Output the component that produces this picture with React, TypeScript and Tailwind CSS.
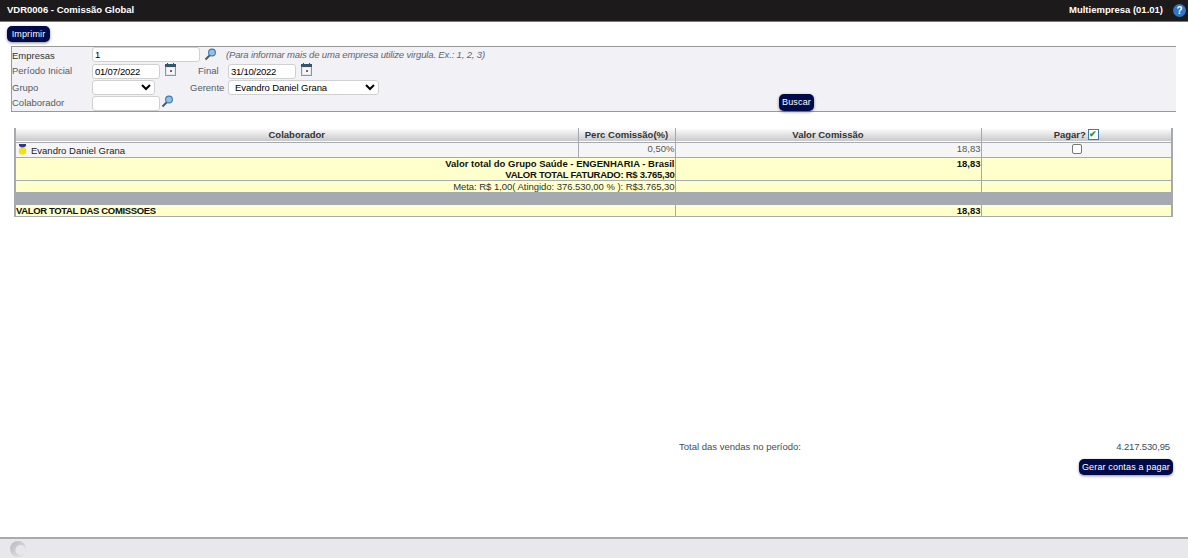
import type { ReactNode } from 'react'

const inputCls =
  'h-[15px] rounded-[3px] border border-[#d0d0d0] bg-white px-[2px] text-[9.5px] text-black outline-none'
const btnCls =
  'rounded-[5px] bg-[#000b4a] text-[9px] leading-none tracking-[0.15px] text-white shadow-[0_1px_3px_rgba(0,0,0,0.45)]'

function Lens() {
  return (
    <svg width="13" height="13" viewBox="0 0 13 13" aria-hidden>
      <line x1="6" y1="7" x2="1.5" y2="11.5" stroke="#4f5a54" strokeWidth="2" />
      <circle cx="8" cy="4.5" r="3.4" fill="#8fc0ea" stroke="#3f78a8" strokeWidth="1.1" />
    </svg>
  )
}

function Calendar() {
  return (
    <svg width="11" height="13" viewBox="0 0 11 13" aria-hidden>
      <rect x="0.5" y="1.5" width="10" height="11" fill="#dfe9f2" stroke="#7f98ae" />
      <rect x="0" y="1" width="11" height="3" fill="#33566f" />
      <rect x="2" y="0" width="1" height="2" fill="#33566f" />
      <rect x="8" y="0" width="1" height="2" fill="#33566f" />
      <rect x="2" y="5" width="7" height="6" fill="#f5f7f9" />
      <rect x="5" y="7" width="2" height="2" fill="#d83a3a" />
    </svg>
  )
}

function Medal() {
  return (
    <svg width="9" height="11" viewBox="0 0 9 11" className="-translate-y-[1px] shrink-0" aria-hidden>
      <path d="M1 0h7v2L5 4H4L1 2z" fill="#2f3a8f" />
      <circle cx="4.5" cy="7" r="3.8" fill="#f4df1c" />
    </svg>
  )
}

function Row({ label, children, labelClass }: { label: string; children: ReactNode; labelClass?: string }) {
  return (
    <div className="flex h-[16px] items-center">
      <span className={`w-[80px] shrink-0 ${labelClass ?? 'text-[#555b66]'}`}>{label}</span>
      {children}
    </div>
  )
}

export default function App() {
  return (
    <div className="flex h-[558px] w-[1188px] flex-col overflow-hidden bg-white font-['Liberation_Sans',Arial,sans-serif] text-[9.5px] text-[#222]">
      <header className="flex h-[22px] shrink-0 items-center justify-between border-b border-[#777] bg-[#1d1a1b] pr-[2px] pl-[7px] font-bold text-white">
        <span>VDR0006 - Comissão Global</span>
        <div className="flex items-center gap-[10px]">
          <span>Multiempresa (01.01)</span>
          <svg width="13" height="13" viewBox="0 0 13 13" aria-hidden>
            <circle cx="6.5" cy="6.5" r="6.5" fill="#2f77c4" />
            <text x="6.5" y="10.2" textAnchor="middle" fontSize="10" fontWeight="700" fill="#fff">?</text>
          </svg>
        </div>
      </header>

      <div className="px-[7px] pt-[4px]">
        <button type="button" className={`${btnCls} h-[16px] w-[43px]`}>Imprimir</button>
      </div>

      <section className="mt-[4px] ml-[11px] h-[66px] w-[1165px] shrink-0 border-y border-l border-[#999] bg-[#f1f1f6]">
        <Row label="Empresas" labelClass="translate-y-px text-[#333]">
          <input readOnly value="1" className={`${inputCls} w-[108px] -translate-y-px`} />
          <span className="ml-[4px] -translate-y-px"><Lens /></span>
          <span className="ml-[9px] tracking-[-0.15px] text-[#5f6670] italic">(Para informar mais de uma empresa utilize virgula. Ex.: 1, 2, 3)</span>
        </Row>
        <Row label="Período Inicial">
          <input readOnly value="01/07/2022" className={`${inputCls} w-[68px] tracking-[-0.25px]`} />
          <span className="ml-[5px] -translate-y-[2px]"><Calendar /></span>
          <span className="ml-[22px] w-[30px] text-[#555b66]">Final</span>
          <input readOnly value="31/10/2022" className={`${inputCls} w-[68px] tracking-[-0.25px]`} />
          <span className="ml-[5px] -translate-y-[2px]"><Calendar /></span>
        </Row>
        <Row label="Grupo" labelClass="translate-y-px text-[#555b66]">
          <select className={`${inputCls} w-[63px]`} />
          <span className="ml-[35px] w-[38px] translate-y-px text-[#555b66]">Gerente</span>
          <select className={`${inputCls} w-[151px] tracking-[-0.1px]`} defaultValue="e">
            <option value="e">Evandro Daniel Grana</option>
          </select>
        </Row>
        <Row label="Colaborador">
          <input readOnly className={`${inputCls} w-[68px]`} />
          <span className="ml-px -translate-y-[2px]"><Lens /></span>
          <button type="button" className={`${btnCls} ml-[605px] h-[17px] w-[35px] -translate-y-[1px]`}>Buscar</button>
        </Row>
      </section>

      <table className="mt-[16px] ml-[14px] w-[1159px] shrink-0 table-fixed border-collapse border-x-2 border-x-[#a4aab0] text-[9.5px] leading-[11px]">
        <colgroup>
          <col className="w-[563px]" />
          <col className="w-[97px]" />
          <col className="w-[306px]" />
          <col />
        </colgroup>
        <thead>
          <tr className="h-[14px] border-b border-[#a4aab0] bg-gradient-to-b from-white to-[#c9c9c9] text-[#333]">
            <th className="p-0 font-bold">Colaborador</th>
            <th className="border-l border-[#a4aab0] p-0 font-bold">Perc Comissão(%)</th>
            <th className="border-l border-[#a4aab0] p-0 font-bold">Valor Comissão</th>
            <th className="border-l border-[#a4aab0] p-0 font-bold">
              <span className="inline-flex items-center gap-[2px]">
                Pagar?
                <span className="flex h-[11px] w-[11px] items-center justify-center border border-[#3a7ca8] bg-white text-[9px] leading-none font-bold text-[#1e9e2d]">✔</span>
              </span>
            </th>
          </tr>
        </thead>
        <tbody>
          <tr className="h-[15px] border-b border-[#a4aab0] bg-[#f5f5f5] text-[#555]">
            <td className="p-0 pt-[2px] pl-[2px] text-[#222]">
              <span className="flex items-center gap-[4px] leading-[11px]"><Medal />Evandro Daniel Grana</span>
            </td>
            <td className="border-l border-[#a4aab0] p-0 text-right align-top">0,50%</td>
            <td className="border-l border-[#a4aab0] p-0 text-right align-top">18,83</td>
            <td className="border-l border-[#a4aab0] p-0 pl-[2px] text-center align-top">
              <span className="mx-auto mt-[1px] block h-[10px] w-[10px] rounded-[2px] border border-[#777] bg-white" />
            </td>
          </tr>
          <tr className="h-[22px] border-b border-[#a4aab0] bg-[#ffffcc] font-bold text-[#111]">
            <td colSpan={2} className="p-0 text-right align-top">
              Valor total do Grupo Saúde - ENGENHARIA - Brasil
              <br />
              <span className="tracking-[-0.27px]">VALOR TOTAL FATURADO: R$ 3.765,30</span>
            </td>
            <td className="border-l border-[#a4aab0] p-0 text-right align-top">18,83</td>
            <td className="border-l border-[#a4aab0] p-0" />
          </tr>
          <tr className="h-[11px] bg-[#ffffcc] text-[#333]">
            <td colSpan={2} className="p-0 text-right tracking-[-0.04px]">Meta: R$ 1,00( Atingido: 376.530,00 % ): R$3.765,30</td>
            <td className="border-l border-[#a4aab0] p-0" />
            <td className="border-l border-[#a4aab0] p-0" />
          </tr>
          <tr className="h-[13px] bg-[#a4aab0]">
            <td colSpan={4} className="p-0" />
          </tr>
          <tr className="h-[11px] border-b border-[#a4aab0] bg-[#ffffcc] font-bold text-[#111]">
            <td className="p-0 tracking-[-0.36px]">VALOR TOTAL DAS COMISSOES</td>
            <td className="p-0" />
            <td className="border-l border-[#a4aab0] p-0 text-right">18,83</td>
            <td className="border-l border-[#a4aab0] p-0" />
          </tr>
        </tbody>
      </table>

      <div className="mt-auto pr-[18px]">
        <div className="flex translate-y-px justify-between pl-[679px] text-[#444c58]">
          <span>Total das vendas no período:</span>
          <span className="tracking-[-0.15px]">4.217.530,95</span>
        </div>
        <div className="mt-[6px] -mr-[3px] flex justify-end pb-[62px]">
          <button type="button" className={`${btnCls} h-[16px] w-[94px]`}>Gerar contas a pagar</button>
        </div>
      </div>

      <footer className="flex h-[21px] shrink-0 items-center border-t-2 border-[#aaa] bg-[#e8e8ec] pl-[10px]">
        <svg width="16" height="16" viewBox="0 0 16 16" aria-hidden>
          <defs>
            <linearGradient id="spin" x1="0" y1="0" x2="1" y2="1">
              <stop offset="0" stopColor="#b8b8ba" />
              <stop offset="1" stopColor="#e8e8ec" />
            </linearGradient>
          </defs>
          <circle cx="8" cy="8" r="8" fill="url(#spin)" />
          <circle cx="10.5" cy="9" r="5" fill="#e8e8ec" />
        </svg>
      </footer>
    </div>
  )
}
